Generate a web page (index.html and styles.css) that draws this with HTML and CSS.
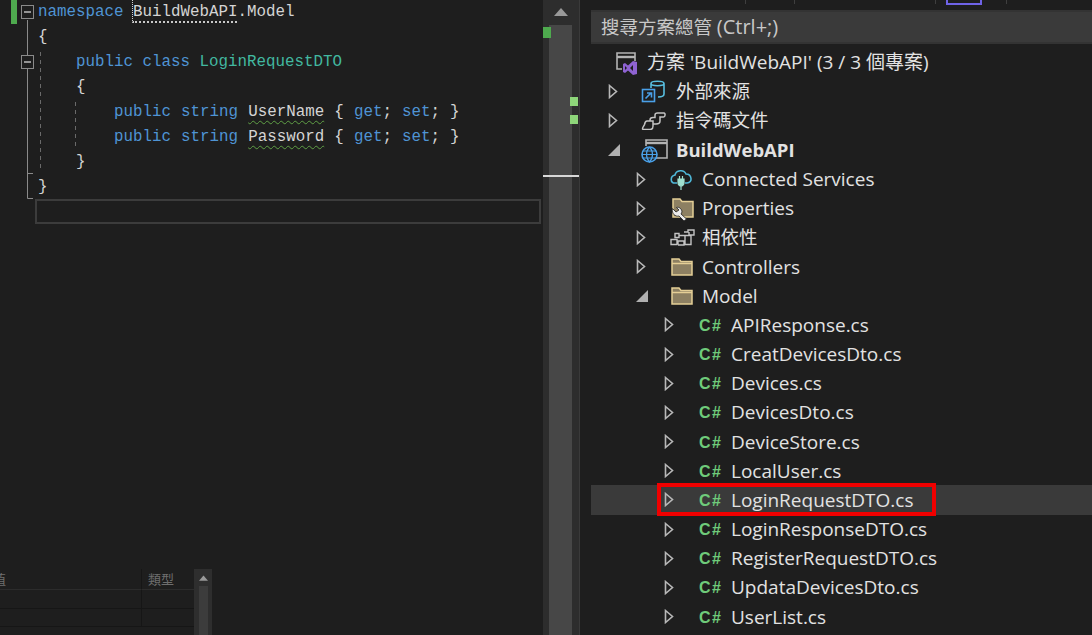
FILE: index.html
```html
<!DOCTYPE html>
<html lang="zh-Hant">
<head>
<meta charset="utf-8">
<title>BuildWebAPI</title>
<link rel="stylesheet" href="styles.css">
</head>
<body>
<div class="app">
  <section class="editor">
    <svg class="margin-art" width="90" height="200" viewBox="0 0 90 200">
      <rect x="11" y="0" width="6" height="24" fill="#4eaa4e"/>
      <path d="M27.5 20V55M27.5 69V198.5H33M27.5 173.5H33" stroke="#8a8a8a" fill="none"/>
      <path d="M40.5 52V172M75.5 102V148" stroke="#6a6a6a" stroke-dasharray="4 4" fill="none"/>
      <rect x="21.5" y="5.5" width="12" height="13" fill="#1e1e1e" stroke="#8a8a8a"/>
      <path d="M24 12H31" stroke="#c8c8c8" stroke-width="1.4"/>
      <rect x="21.5" y="55.5" width="12" height="13" fill="#1e1e1e" stroke="#8a8a8a"/>
      <path d="M24 62H31" stroke="#c8c8c8" stroke-width="1.4"/>
    </svg>
    <div class="code">
      <div class="line"><span class="kw">namespace</span> <span class="ref">BuildWebAPI</span>.Model</div>
      <div class="line">{</div>
      <div class="line i1"><span class="kw">public class</span> <span class="type">LoginRequestDTO</span></div>
      <div class="line i1">{</div>
      <div class="line i2"><span class="kw">public string</span> <span class="warn">UserName</span> { <span class="kw">get</span>; <span class="kw">set</span>; }</div>
      <div class="line i2"><span class="kw">public string</span> <span class="warn">Password</span> { <span class="kw">get</span>; <span class="kw">set</span>; }</div>
      <div class="line i1">}</div>
      <div class="line">}</div>
      <div class="current-line"></div>
    </div>
    <div class="locals">
      <div class="locals-grid">
        <div class="cell head value-head"><span>值</span></div>
        <div class="cell head">類型</div>
        <div class="cell"></div>
        <div class="cell"></div>
        <div class="cell"></div>
        <div class="cell"></div>
      </div>
      <div class="locals-scroll">
        <svg width="12" height="7" viewBox="0 0 12 7"><path d="M6 0L12 7H0Z" fill="#999"/></svg>
        <div class="locals-thumb"></div>
      </div>
    </div>
  </section>

  <aside class="overview">
    <svg class="overview-arrow" width="14" height="8" viewBox="0 0 14 8"><path d="M7 0L14 8H0Z" fill="#999"/></svg>
    <div class="overview-thumb"></div>
    <i class="mark mark-a"></i>
    <i class="mark mark-b"></i>
    <i class="mark mark-c"></i>
    <i class="caret-mark"></i>
  </aside>

  <section class="panel">
    <div class="tabs">
      <i class="tick t1"></i><i class="tick t2"></i><i class="tick t3"></i>
      <i class="tab-active"></i><i class="tick t4"></i>
    </div>
    <div class="search">搜尋方案總管 <span class="hint">(Ctrl+;)</span></div>
    <div class="tree">
      <div class="row solution cjk">
        <span class="icon"><svg width="25" height="26" viewBox="0 0 25 26"><path d="M7 19H2V3H20V11" fill="none" stroke="#b4b4b4" stroke-width="1.6"/><path d="M2 7H20" stroke="#b4b4b4" stroke-width="2.4"/><path d="M22 12V24L18 25L13 20.5L10 23L8 22V14L10 13L13 15.5L18 11ZM18 15L15 18L18 21Z M10 16V20L12 18Z" fill="#8f63d2" fill-rule="evenodd"/></svg></span>
        <span class="label">方案 'BuildWebAPI' (3 / 3 個專案)</span>
      </div>
      <div class="row l1 cjk">
        <span class="arrow"><svg width="10" height="15" viewBox="0 0 10 15"><path d="M1.5 1.5L8.5 7.5L1.5 13.5Z" fill="none" stroke="#b8b8b8" stroke-width="1.6"/></svg></span>
        <span class="icon"><svg width="25" height="25" viewBox="0 0 25 25"><path d="M10 4.500C10 1.500 23 1.500 23 4.500V15C23 17 20 18 17 18M10 4.500C10 7.500 23 7.500 23 4.500M10 4.500V9" fill="none" stroke="#58bfe0" stroke-width="1.6"/><rect x="1.500" y="10.500" width="12" height="12" fill="#1e1e1e" stroke="#4aa0e8" stroke-width="1.6"/><path d="M4.500 19.500L10 14M6 14H10.500V18.500" fill="none" stroke="#4aa0e8" stroke-width="1.6"/></svg></span>
        <span class="label">外部來源</span>
      </div>
      <div class="row l1 cjk">
        <span class="arrow"><svg width="10" height="15" viewBox="0 0 10 15"><path d="M1.5 1.5L8.5 7.5L1.5 13.5Z" fill="none" stroke="#b8b8b8" stroke-width="1.6"/></svg></span>
        <span class="icon"><svg width="25" height="18" viewBox="0 0 25 18"><path d="M1.500 17C1.500 15 3 14 3.500 12.500C4 10 5 9 6 9H12V14C12 16 11 17.500 9 17.500H3C2 17.500 1.500 17.500 1.500 17ZM9 9V8C9 6.500 10 5.500 12 5.500H14V3C14 1.500 15 1 16.500 1H23C24.500 1 24.500 5 22.500 5H19V9C19 11 17 12 15 12H12" fill="none" stroke="#c4c4c4" stroke-width="1.5"/></svg></span>
        <span class="label">指令碼文件</span>
      </div>
      <div class="row l1 project">
        <span class="arrow"><svg width="12" height="12" viewBox="0 0 12 12"><path d="M12 0V12H0Z" fill="#b0b0b0"/></svg></span>
        <span class="icon"><svg width="27" height="25" viewBox="0 0 27 25"><path d="M5 8V2H26V20H15" fill="none" stroke="#b4b4b4" stroke-width="1.6"/><path d="M5 5H26" stroke="#b4b4b4" stroke-width="2.4"/><circle cx="8.500" cy="16.500" r="7.500" fill="#1e1e1e" stroke="#4aa0e8" stroke-width="1.6"/><path d="M1 16.500H16M8.500 9C4.500 13 4.500 20 8.500 24C12.500 20 12.500 13 8.500 9M2 13H15M2 20H15" fill="none" stroke="#4aa0e8" stroke-width="1.2"/></svg></span>
        <span class="label">BuildWebAPI</span>
      </div>
      <div class="row l2">
        <span class="arrow"><svg width="10" height="15" viewBox="0 0 10 15"><path d="M1.5 1.5L8.5 7.5L1.5 13.5Z" fill="none" stroke="#b8b8b8" stroke-width="1.6"/></svg></span>
        <span class="icon"><svg width="23" height="23" viewBox="0 0 23 23"><path d="M7 15H5C0 15 0 8 5 7C6 2 14 1 16 6C22 6 23 15 17 15H15" fill="none" stroke="#4fb8d8" stroke-width="1.6"/><path d="M8 11V15C8 17 10 18 11 18C12 18 14 17 14 15V11ZM11 18V22M9.500 11V8M12.500 11V8" fill="#9fe0d0" stroke="#9fe0d0" stroke-width="1.2"/></svg></span>
        <span class="label">Connected Services</span>
      </div>
      <div class="row l2">
        <span class="arrow"><svg width="10" height="15" viewBox="0 0 10 15"><path d="M1.5 1.5L8.5 7.5L1.5 13.5Z" fill="none" stroke="#b8b8b8" stroke-width="1.6"/></svg></span>
        <span class="icon"><svg width="24" height="26" viewBox="0 0 24 26"><path d="M3 4H10L12 6.500H23V22H3Z" fill="#8d8062" stroke="#e5cf96" stroke-width="1.5"/><path d="M2.500 13.500L6 17L9 15L6.500 12.500C9 11.500 12 14 12 17L11 19L16.500 24L14 26L9 21C5 22 1.500 18.500 2.500 13.500Z" fill="#ececec" stroke="#1e1e1e" stroke-width=".8"/></svg></span>
        <span class="label">Properties</span>
      </div>
      <div class="row l2 cjk">
        <span class="arrow"><svg width="10" height="15" viewBox="0 0 10 15"><path d="M1.5 1.5L8.5 7.5L1.5 13.5Z" fill="none" stroke="#b8b8b8" stroke-width="1.6"/></svg></span>
        <span class="icon"><svg width="25" height="17" viewBox="0 0 25 17"><path d="M5 4.500H9V8.500H5ZM1 10.500H7V15.500H1ZM8 15.500V12H14V16H8M14 3H18V1H24V6H19V3M15 6.500H21V15.500H15ZM9 6.500H15" fill="none" stroke="#c4c4c4" stroke-width="1.4"/></svg></span>
        <span class="label">相依性</span>
      </div>
      <div class="row l2">
        <span class="arrow"><svg width="10" height="15" viewBox="0 0 10 15"><path d="M1.5 1.5L8.5 7.5L1.5 13.5Z" fill="none" stroke="#b8b8b8" stroke-width="1.6"/></svg></span>
        <span class="icon"><svg width="24" height="19" viewBox="0 0 24 19"><path d="M2 2H9L11 4.500H22V18H2Z" fill="#8d8062" stroke="#e5cf96" stroke-width="1.5"/><path d="M2 6.500H22" stroke="#e5cf96" stroke-width="1.5"/></svg></span>
        <span class="label">Controllers</span>
      </div>
      <div class="row l2">
        <span class="arrow"><svg width="12" height="12" viewBox="0 0 12 12"><path d="M12 0V12H0Z" fill="#b0b0b0"/></svg></span>
        <span class="icon"><svg width="24" height="19" viewBox="0 0 24 19"><path d="M2 2H9L11 4.500H22V18H2Z" fill="#8d8062" stroke="#e5cf96" stroke-width="1.5"/><path d="M2 6.500H22" stroke="#e5cf96" stroke-width="1.5"/></svg></span>
        <span class="label">Model</span>
      </div>
      <div class="row l3"><span class="arrow"><svg width="10" height="15" viewBox="0 0 10 15"><path d="M1.5 1.5L8.5 7.5L1.5 13.5Z" fill="none" stroke="#b8b8b8" stroke-width="1.6"/></svg></span><span class="icon cs">C#</span><span class="label">APIResponse.cs</span></div>
      <div class="row l3"><span class="arrow"><svg width="10" height="15" viewBox="0 0 10 15"><path d="M1.5 1.5L8.5 7.5L1.5 13.5Z" fill="none" stroke="#b8b8b8" stroke-width="1.6"/></svg></span><span class="icon cs">C#</span><span class="label">CreatDevicesDto.cs</span></div>
      <div class="row l3"><span class="arrow"><svg width="10" height="15" viewBox="0 0 10 15"><path d="M1.5 1.5L8.5 7.5L1.5 13.5Z" fill="none" stroke="#b8b8b8" stroke-width="1.6"/></svg></span><span class="icon cs">C#</span><span class="label">Devices.cs</span></div>
      <div class="row l3"><span class="arrow"><svg width="10" height="15" viewBox="0 0 10 15"><path d="M1.5 1.5L8.5 7.5L1.5 13.5Z" fill="none" stroke="#b8b8b8" stroke-width="1.6"/></svg></span><span class="icon cs">C#</span><span class="label">DevicesDto.cs</span></div>
      <div class="row l3"><span class="arrow"><svg width="10" height="15" viewBox="0 0 10 15"><path d="M1.5 1.5L8.5 7.5L1.5 13.5Z" fill="none" stroke="#b8b8b8" stroke-width="1.6"/></svg></span><span class="icon cs">C#</span><span class="label">DeviceStore.cs</span></div>
      <div class="row l3"><span class="arrow"><svg width="10" height="15" viewBox="0 0 10 15"><path d="M1.5 1.5L8.5 7.5L1.5 13.5Z" fill="none" stroke="#b8b8b8" stroke-width="1.6"/></svg></span><span class="icon cs">C#</span><span class="label">LocalUser.cs</span></div>
      <div class="row l3 selected"><span class="arrow"><svg width="10" height="15" viewBox="0 0 10 15"><path d="M1.5 1.5L8.5 7.5L1.5 13.5Z" fill="none" stroke="#b8b8b8" stroke-width="1.6"/></svg></span><span class="icon cs">C#</span><span class="label">LoginRequestDTO.cs</span><i class="callout"></i></div>
      <div class="row l3"><span class="arrow"><svg width="10" height="15" viewBox="0 0 10 15"><path d="M1.5 1.5L8.5 7.5L1.5 13.5Z" fill="none" stroke="#b8b8b8" stroke-width="1.6"/></svg></span><span class="icon cs">C#</span><span class="label">LoginResponseDTO.cs</span></div>
      <div class="row l3"><span class="arrow"><svg width="10" height="15" viewBox="0 0 10 15"><path d="M1.5 1.5L8.5 7.5L1.5 13.5Z" fill="none" stroke="#b8b8b8" stroke-width="1.6"/></svg></span><span class="icon cs">C#</span><span class="label">RegisterRequestDTO.cs</span></div>
      <div class="row l3"><span class="arrow"><svg width="10" height="15" viewBox="0 0 10 15"><path d="M1.5 1.5L8.5 7.5L1.5 13.5Z" fill="none" stroke="#b8b8b8" stroke-width="1.6"/></svg></span><span class="icon cs">C#</span><span class="label">UpdataDevicesDto.cs</span></div>
      <div class="row l3"><span class="arrow"><svg width="10" height="15" viewBox="0 0 10 15"><path d="M1.5 1.5L8.5 7.5L1.5 13.5Z" fill="none" stroke="#b8b8b8" stroke-width="1.6"/></svg></span><span class="icon cs">C#</span><span class="label">UserList.cs</span></div>
    </div>
  </section>
</div>
</body>
</html>
```

FILE: styles.css
```css
* { box-sizing: border-box; }
html, body { margin: 0; height: 100%; background: #1e1e1e; overflow: hidden; }

.app {
  display: flex;
  width: 1092px;
  height: 635px;
  overflow: hidden;
  font-family: "Open Sans", "Noto Sans CJK TC", sans-serif;
}

/* editor */
.editor {
  position: relative;
  width: 543px;
  flex: none;
  display: flex;
  flex-direction: column;
  justify-content: space-between;
  background: #1e1e1e;
  overflow: hidden;
}
.margin-art { position: absolute; left: 0; top: 0; }
.code {
  margin-top: 0;
  padding-left: 38px;
  font: 15.83px/25px "Liberation Mono", "Noto Sans CJK TC", monospace;
  color: #d4d4d4;
}
.line { height: 25px; white-space: pre; }
.i1 { padding-left: 38px; }
.i2 { padding-left: 76px; word-spacing: .6px; }
.kw { color: #4f94d4; }
.type { color: #42b8a0; }
.ref { display: inline-block; height: 23px; line-height: 25px; border-left: 1px dotted #d0d0d0; border-bottom: 2px dotted #c8c8c8; margin-left: -1px; }
.warn {
  text-decoration: underline wavy #5f9f45 1px;
  text-underline-offset: 4px;
}
.current-line {
  margin: -1px 2px 0 -3px;
  height: 25px;
  border: 2px solid #3c3c3c;
}

/* locals table */
.locals {
  display: flex;
  width: 212px;
  height: 66px;
  flex: none;
}
.locals-grid {
  flex: 1;
  display: grid;
  grid-template-columns: 142px 1fr;
  grid-template-rows: 21px 19px 18px;
  font-size: 13px;
  color: #6e6e6e;
}
.cell { border-bottom: 1px solid #161616; }
.cell:nth-child(odd) { border-right: 1px solid #161616; }
.head {
  line-height: 20px;
  padding-left: 6px;
  border-bottom-color: #2c2c2c;
}
.value-head { padding-left: 0; overflow: hidden; }
.value-head span { display: block; margin-left: -7px; }
.locals-scroll {
  width: 18px;
  flex: none;
  padding-top: 6px;
  background: #2e2e2e;
  display: flex;
  flex-direction: column;
  align-items: center;
  gap: 5px;
}
.locals-scroll svg { width: 9px; height: 6px; }
.locals-thumb { width: 9px; flex: 1; background: #3c3c3c; }

/* overview bar */
.overview {
  position: relative;
  width: 37px;
  height: 635px;
  flex: none;
  background: #2d2d2d;
  margin-right: 11px;
  border-right: 1px solid #3a3a3a;
  display: flex;
  flex-direction: column;
  align-items: center;
  padding: 8px 0 0 0;
}
.overview-arrow { margin-left: -1px; }
.overview-thumb {
  width: 23px;
  flex: 1;
  margin-top: 9px;
  margin-left: -1px;
  background: #474747;
}
.mark { position: absolute; display: block; width: 8px; height: 9px; }
.mark-a { left: 0; top: 27px; height: 11px; background: #4eaa4e; }
.mark-b { left: 27px; top: 97px; background: #8ed67a; }
.mark-c { left: 27px; top: 115px; background: #8ed67a; }
.caret-mark { position: absolute; left: 0; top: 175px; width: 36px; height: 2px; background: #d8d8d8; }

/* solution explorer */
.panel {
  flex: 1;
  min-width: 0;
  display: flex;
  flex-direction: column;
  background: #1e1e1e;
}
.tabs { position: relative; height: 10px; flex: none; }
.tick { position: absolute; top: 0; width: 1px; height: 4px; background: #3f3f3f; }
.t1 { left: 154px; }
.t2 { left: 203px; }
.t3 { left: 344px; }
.t4 { left: 415px; }
.tab-active {
  position: absolute;
  left: 355px;
  top: -2px;
  width: 36px;
  height: 7px;
  border: 2px solid #6f63e6;
}
.search {
  height: 34px;
  flex: none;
  padding-left: 10px;
  line-height: 29px;
  font-size: 18.5px;
  color: #c8c8c8;
  background: #3a3a3a;
  border-top: 2px solid #333;
  border-bottom: 2px solid #333;
}
.hint { font-size: 20px; }
.tree { padding-top: 4px; }
.row {
  position: relative;
  display: flex;
  align-items: center;
  height: 29.16px;
  font-size: 19px;
  color: #e2e2e2;
  white-space: nowrap;
}
.cjk { font-size: 18.5px; }
.cjk .label { margin-bottom: 4px; }
.arrow { display: flex; flex: none; }
.icon { display: flex; flex: none; align-items: center; }
.solution { padding-left: 24px; }
.solution .icon { width: 32px; }
.solution .label { font-size: 19px; }
.l1 { padding-left: 17px; }
.l1 .arrow { width: 33px; }
.l1 .icon { width: 35px; }
.l2 { padding-left: 45px; }
.l2 .arrow { width: 35px; }
.l2 .icon { width: 31px; }
.l2 .icon svg { margin-left: -1px; }
.l3 { padding-left: 73px; }
.l3 .arrow { width: 35px; }
.l3 .icon { width: 32px; padding-top: 2px; }
.project { font-size: 18.5px; }
.project .label { font-weight: 700; margin-bottom: 2px; }
.cs {
  font: 700 16px/1 "Liberation Sans", sans-serif;
  letter-spacing: 1.5px;
  color: #6fcb7a;
}
.selected { background: #3a3a3a; }
.callout {
  position: absolute;
  left: 66px;
  top: -2px;
  width: 279px;
  height: 33px;
  border: 4px solid #f00000;
}
```
